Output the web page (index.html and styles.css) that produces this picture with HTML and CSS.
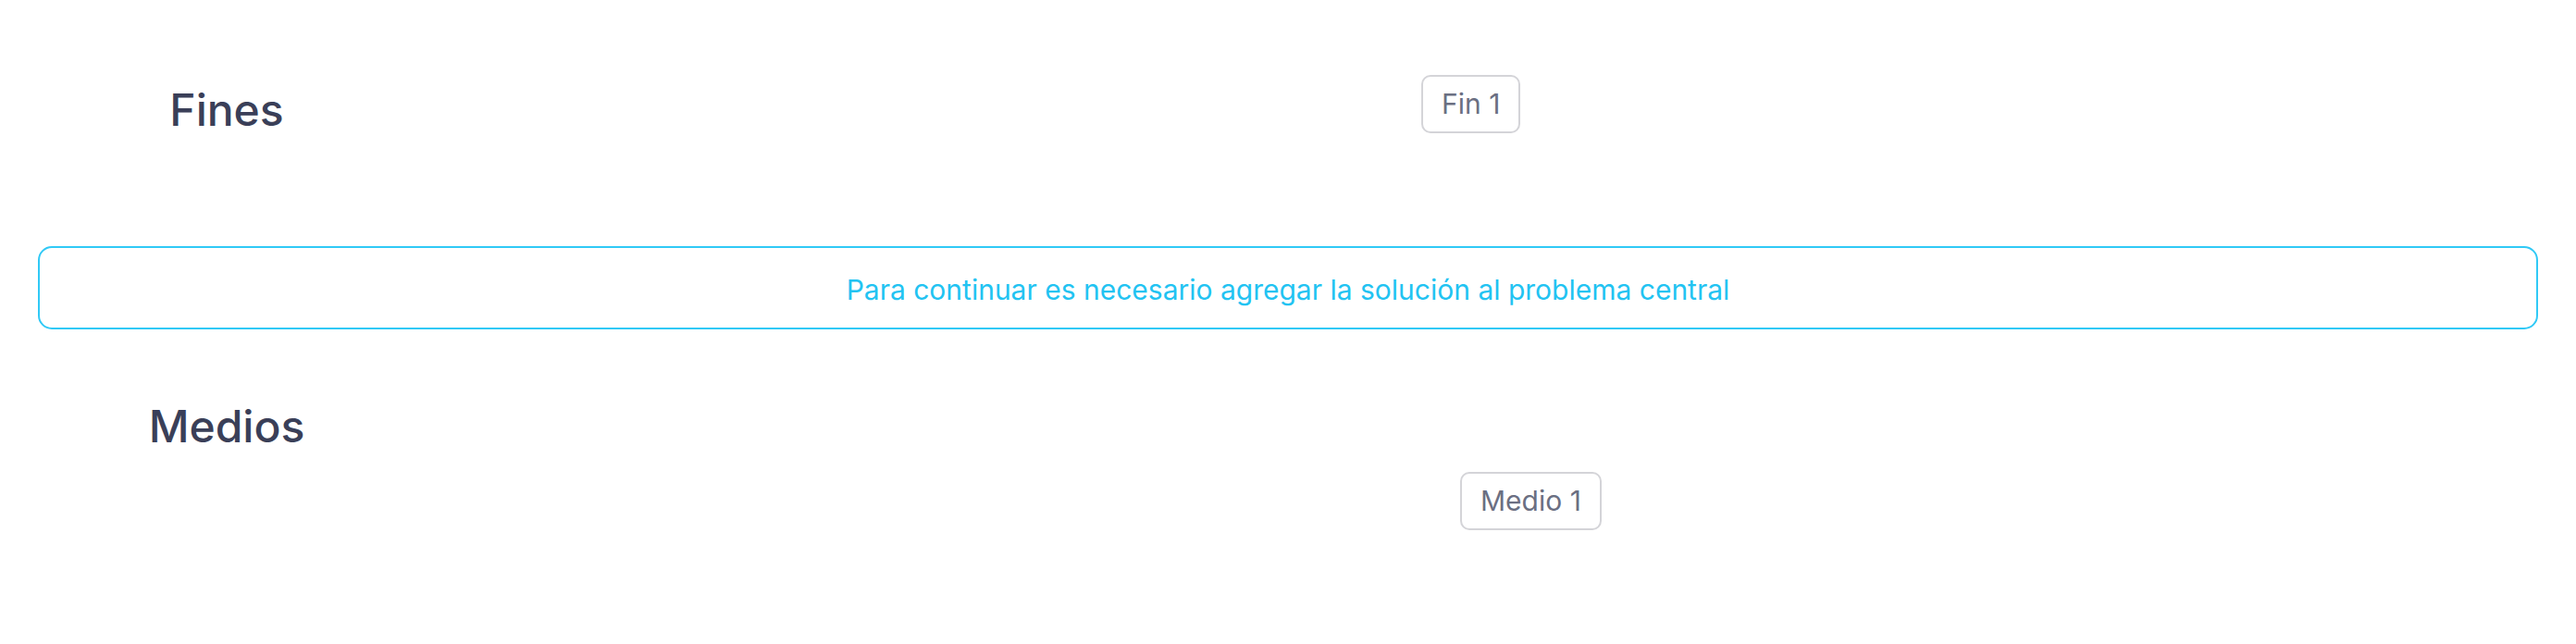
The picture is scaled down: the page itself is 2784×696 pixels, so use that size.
FILE: index.html
```html
<!DOCTYPE html>
<html lang="es">
<head>
  <meta charset="UTF-8" />
  <meta name="viewport" content="width=device-width, initial-scale=1.0" />
  <title>Árbol de objetivos</title>
  <link rel="stylesheet" href="styles.css">
</head>
<body>

  <div class="page">
    <!-- Fines -->
    <div class="level level-fines">
      <h2 class="level-title">Fines</h2>
      <div class="nodes">
        <div class="node node-fin">Fin 1</div>
      </div>
    </div>

    <!-- Aviso -->
    <div class="notice">
      Para continuar es necesario agregar la solución al problema central
    </div>

    <!-- Medios -->
    <div class="level level-medios">
      <h2 class="level-title">Medios</h2>
      <div class="nodes">
        <div class="node node-medio">Medio 1</div>
      </div>
    </div>
  </div>

</body>
</html>
```

FILE: styles.css
```css
body {
  font-family: Inter, 'Noto Sans', sans-serif;
  margin: 0;
  padding: 0;
  background-color: #ffffff;
}

.page {
  padding: 81px 41px 0 41px;
}

.level {
  display: flex;
  align-items: flex-start;
}

.level-title {
  width: 408px;
  margin: 0;
  text-align: center;
  font-size: 48px;
  font-weight: 500;
  line-height: 58px;
  color: #3a3f58;
}

.level-fines .level-title {
  margin-top: 9px;
}

.level-medios .level-title {
  margin-top: 1px;
}

.nodes {
  flex: 1;
  display: flex;
}

.node {
  border: 2px solid #d4d4d8;
  border-radius: 10px;
  padding: 12px 20px;
  font-size: 30px;
  line-height: 35px;
  color: #6b6f82;
  background: #ffffff;
}

.node-fin {
  margin-left: 1087px;
}

.node-medio {
  margin-left: 1129px;
  margin-top: 79px;
}

.notice {
  margin: 118px 0 75px 0;
  border: 2px solid #30c9f6;
  border-radius: 15px;
  padding: 27px 20px 22px 20px;
  text-align: center;
  font-size: 30px;
  line-height: 37px;
  color: #22c3f2;
}
```
